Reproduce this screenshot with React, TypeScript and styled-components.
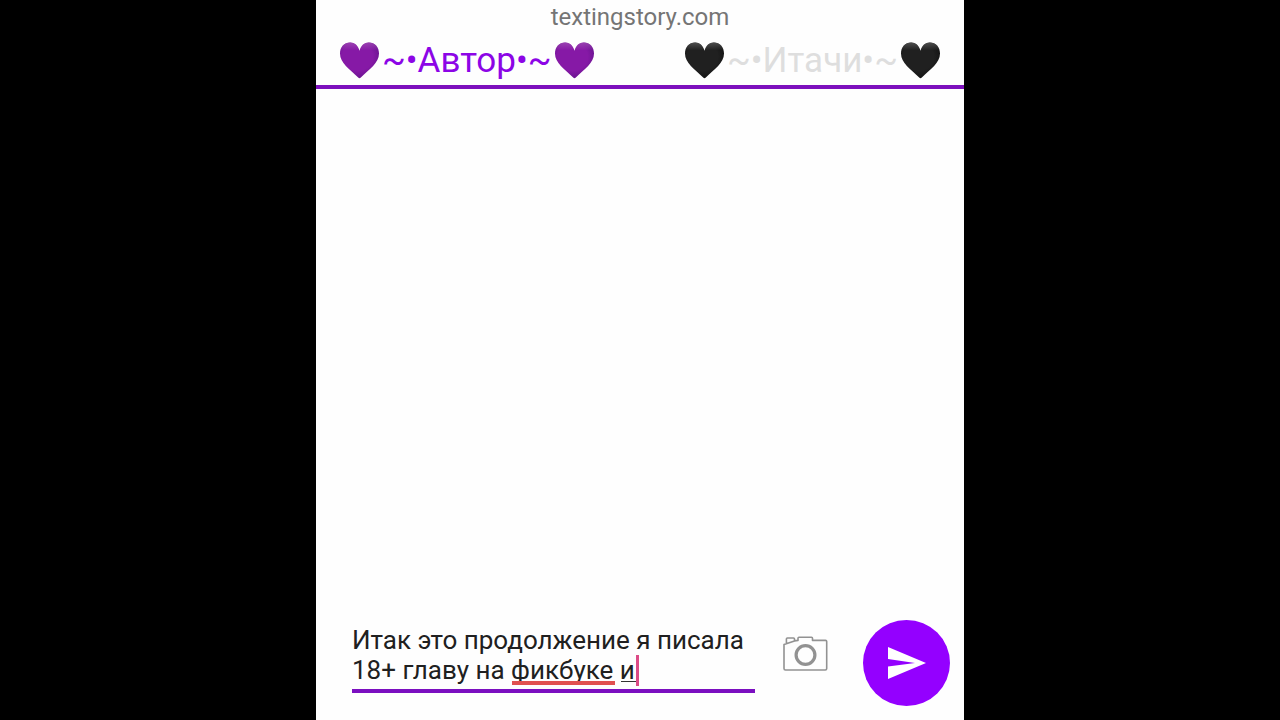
import React, { useState } from 'react';
import styled, { createGlobalStyle } from 'styled-components';

const GlobalStyle = createGlobalStyle`
  * { box-sizing: border-box; }
  body {
    margin: 0;
    background: #000;
    font-family: Roboto, "Noto Sans", sans-serif;
  }
`;

const Screen = styled.main`
  display: flex;
  flex-direction: column;
  width: 100%;
  max-width: 648px;
  min-height: 100vh;
  margin: 0 auto;
  background: #fefefe;
`;

const Header = styled.header`
  padding: 4px 24px 0;
  border-bottom: 4px solid #7d10bd;
`;

const Site = styled.p`
  margin: 0;
  text-align: center;
  font-size: 24px;
  line-height: 26px;
  color: #757575;
`;

const Names = styled.nav`
  display: flex;
  justify-content: space-between;
  padding: 8px 0 3px;
`;

const NameButton = styled.button<{ $color: string }>`
  display: flex;
  align-items: center;
  gap: 3px;
  height: 44px;
  padding: 0;
  border: 0;
  background: none;
  font-family: inherit;
  font-size: 35px;
  line-height: 44px;
  color: ${({ $color }) => $color};
`;

const NameText = styled.span`
  padding-top: 2px;
`;

const HeartIcon = styled.svg`
  display: block;
  width: 39px;
  height: 37px;
`;

const Messages = styled.section`
  flex: 1;
`;

const Composer = styled.form`
  display: flex;
  align-items: flex-start;
  padding: 0 14px 14px 36px;
`;

const Field = styled.div`
  position: relative;
  flex: 1;
  margin-top: 5px;
  border-bottom: 4px solid #7b0fc0;
`;

const MessageInput = styled.textarea`
  display: block;
  width: 100%;
  height: 64px;
  padding: 0;
  border: 0;
  outline: 0;
  resize: none;
  overflow: hidden;
  background: none;
  font-family: inherit;
  font-size: 26px;
  line-height: 30px;
  color: #202020;
`;

const SpellingMark = styled.span`
  position: absolute;
  left: 160px;
  top: 56px;
  width: 103px;
  height: 4px;
  background: #e05050;
`;

const ComposingMark = styled.span`
  position: absolute;
  left: 269px;
  top: 56px;
  width: 15px;
  height: 1px;
  background: #333;
`;

const Caret = styled.span`
  position: absolute;
  left: 284px;
  top: 30px;
  width: 3px;
  height: 31px;
  background: #dc4b87;
`;

const CameraButton = styled.button`
  margin: 16px 0 0 28px;
  padding: 0;
  border: 0;
  background: none;

  svg { display: block; }
`;

const SendButton = styled.button`
  display: flex;
  align-items: center;
  justify-content: center;
  width: 87px;
  height: 86px;
  margin-left: 35px;
  padding: 0;
  border: 0;
  border-radius: 50%;
  background: #9400ff;
`;

function Heart({ id, light, base, edge }: { id: string; light: string; base: string; edge: string }) {
  return (
    <HeartIcon viewBox="0 0 39 37" aria-hidden="true">
      <defs>
        <radialGradient id={id} cx="0.45" cy="0.4" r="0.65">
          <stop offset="0" stopColor={base} />
          <stop offset="0.6" stopColor={base} />
          <stop offset="1" stopColor={edge} />
        </radialGradient>
        <linearGradient id={`${id}-shine`} x1="0" y1="0" x2="0" y2="1">
          <stop offset="0" stopColor={light} stopOpacity="0.8" />
          <stop offset="0.22" stopColor={light} stopOpacity="0" />
        </linearGradient>
      </defs>
      {[id, `${id}-shine`].map((fill) => (
        <path
          key={fill}
          fill={`url(#${fill})`}
          d="M19.5 8.8C18 3.5 14.5.6 10.2.6 4.2.6 0 5.2 0 11.6c0 9.4 9.6 15.8 18.2 24q1.3 1.2 2.6 0C29.4 27.4 39 21 39 11.6 39 5.2 34.8.6 28.8.6 24.5.6 21 3.5 19.5 8.8Z"
        />
      ))}
    </HeartIcon>
  );
}

const purple = { light: '#a04cb4', base: '#8619a6', edge: '#64128c' };
const black = { light: '#5a5a5a', base: '#202020', edge: '#101010' };

export default function App() {
  const [text, setText] = useState('Итак это продолжение я писала 18+ главу на фикбуке и');

  return (
    <>
      <GlobalStyle />
      <Screen>
        <Header>
          <Site>textingstory.com</Site>
          <Names aria-label="Собеседники">
            <NameButton type="button" $color="#8c05e6">
              <Heart id="author-left" {...purple} />
              <NameText>~•Автор•~</NameText>
              <Heart id="author-right" {...purple} />
            </NameButton>
            <NameButton type="button" $color="#dedede">
              <Heart id="itachi-left" {...black} />
              <NameText>~•Итачи•~</NameText>
              <Heart id="itachi-right" {...black} />
            </NameButton>
          </Names>
        </Header>
        <Messages />
        <Composer onSubmit={(event) => event.preventDefault()}>
          <Field>
            <MessageInput
              aria-label="Сообщение"
              spellCheck={false}
              value={text}
              onChange={(event) => setText(event.target.value)}
            />
            <SpellingMark />
            <ComposingMark />
            <Caret />
          </Field>
          <CameraButton type="button" aria-label="Камера">
            <svg width="45" height="36" viewBox="0 0 45 36" fill="none" stroke="#929292" strokeWidth="1.6" strokeLinejoin="round">
              <path d="M11.5 4.9 15 4.4V2.2Q15 1.2 16 1.2H28.5Q29.5 1.2 29.5 2.2V4.4H42.5Q43.7 4.4 43.7 5.6V32.6Q43.7 34 42.3 34H2.5Q1 34 1 32.5V8.6L11.5 4.9V3Q11.5 2 10.5 2H4.4Q3.4 2 3.4 3V7.6" />
              <circle cx="22.5" cy="19" r="9.4" strokeWidth="3.2" />
            </svg>
          </CameraButton>
          <SendButton type="submit" aria-label="Отправить">
            <svg width="38" height="34" viewBox="0 0 38 34" fill="#fff" aria-hidden="true">
              <path d="M0 1 38 17 0 33V20.5L27 17 0 13Z" />
            </svg>
          </SendButton>
        </Composer>
      </Screen>
    </>
  );
}
